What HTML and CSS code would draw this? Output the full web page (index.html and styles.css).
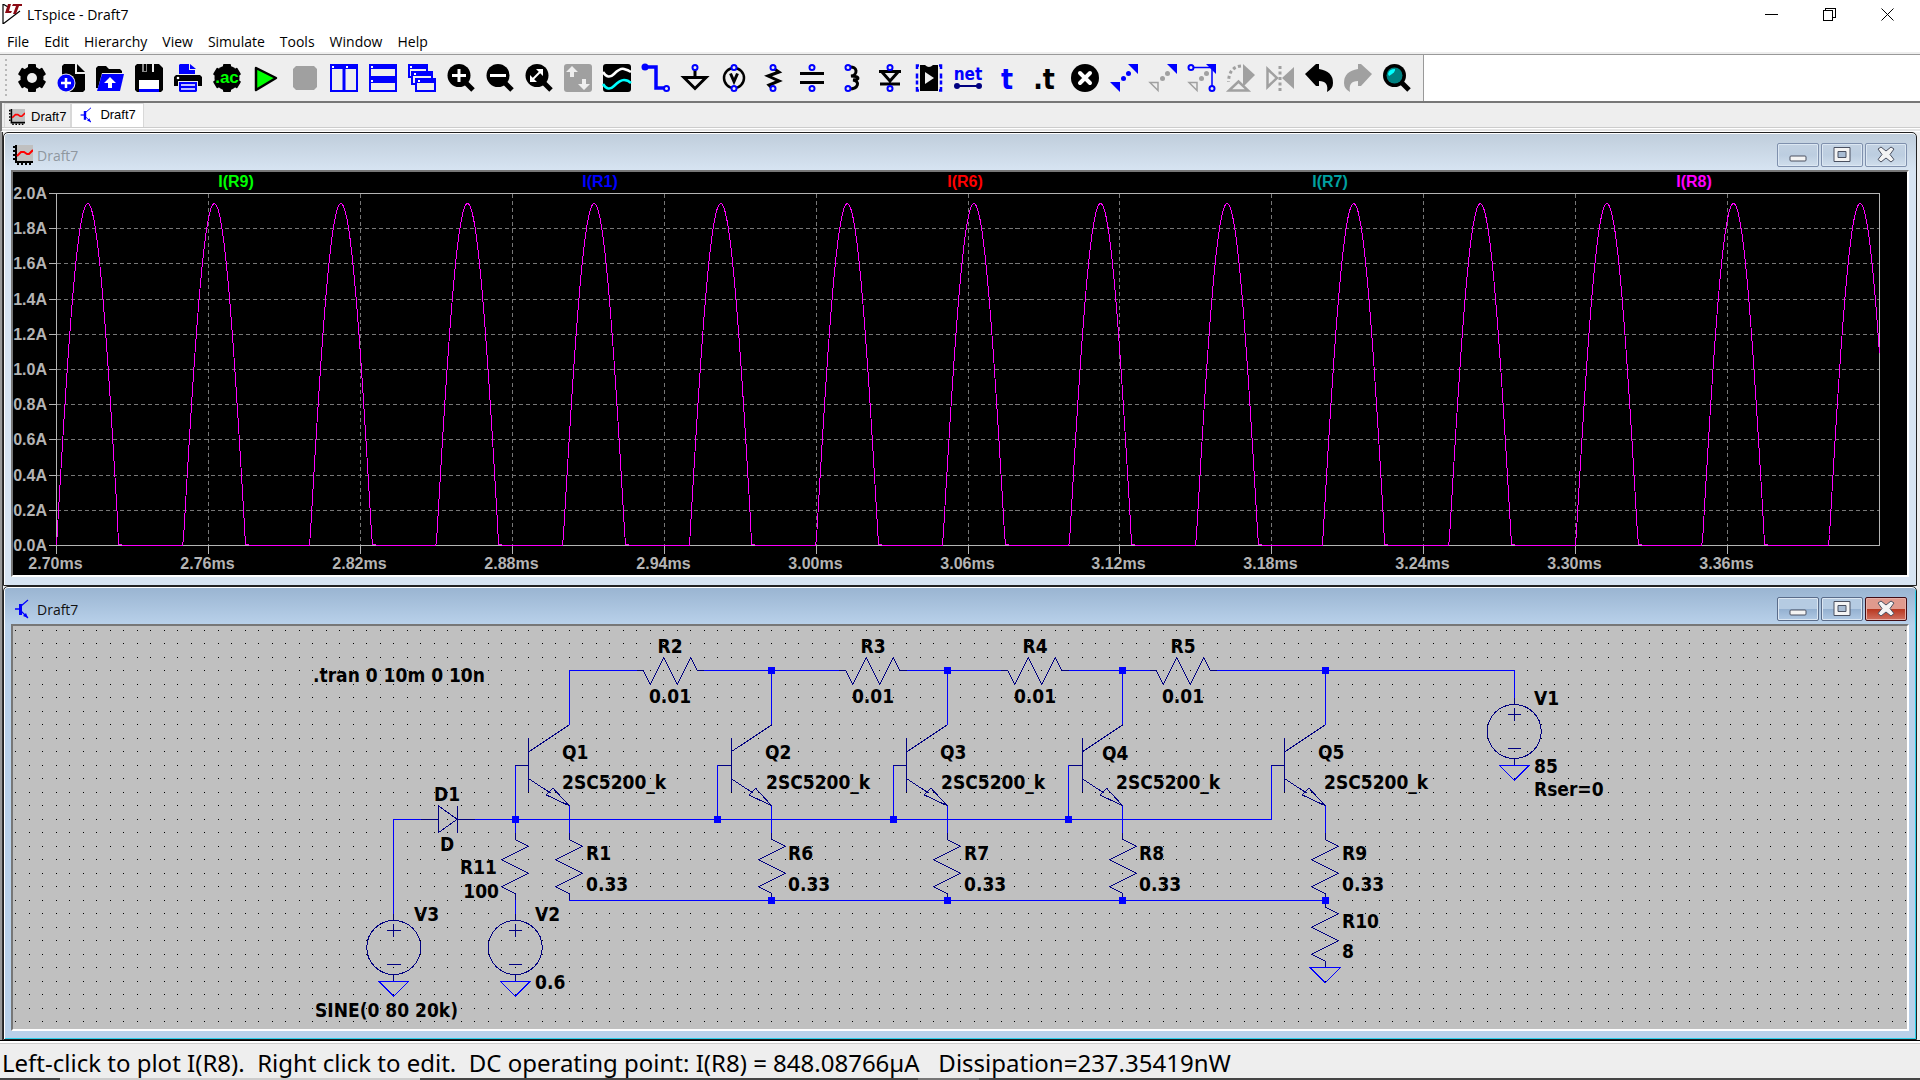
FILE: index.html
```
<!DOCTYPE html>
<html lang="en">
<head>
<meta charset="UTF-8" />
<meta name="viewport" content="width=device-width, initial-scale=1" />
<title>LTspice - Draft7</title>
<link rel="stylesheet" href="styles.css">
</head>
<body>

<!-- shared shapes -->
<svg class="defs" aria-hidden="true">
  <defs>
    <symbol id="ic-graph" viewBox="0 0 20 20">
      <path d="M4 0h16v16H4z" fill="#c0c0c0"/>
      <path d="M3 0v17h17" fill="none" stroke="#000" stroke-width="2"/>
      <path d="M0 2h2M0 6h2M0 10h2M0 14h2M5 18v2M9 18v2M13 18v2M17 18v2" stroke="#000" stroke-width="2"/>
      <path d="M4 11l4-4h3l3 2h2l4-4" fill="none" stroke="#f00" stroke-width="2"/>
    </symbol>
    <symbol id="ic-npn" viewBox="0 0 20 20">
      <path d="M2 10h5" stroke="#00f" stroke-width="1.500"/>
      <path d="M7.500 5v11" stroke="#00f" stroke-width="3"/>
      <path d="M8 7l7-6M8 12l7 7" fill="none" stroke="#00f" stroke-width="1.200"/>
      <path d="M15 19l-5-2 3-3z" fill="#00f"/>
    </symbol>
    <symbol id="ic-min" viewBox="0 0 18 18"><rect x="1" y="10" width="16" height="5" rx="1" fill="#f4f4f4" stroke="#4a5060"/></symbol>
    <symbol id="ic-max" viewBox="0 0 18 18">
      <path d="M1 1.500h16v14H1z" fill="#f4f4f4" stroke="#4a5060"/>
      <path d="M5 5.500h8v6H5z" fill="#a9bdd4" stroke="#4a5060"/>
    </symbol>
    <symbol id="ic-close" viewBox="0 0 18 18">
      <path d="M1 3l3-2 5 4 5-4 3 2-4 5.500 4 5-3 2.500-5-4-5 4-3-2.500 4-5z" fill="#f4f4f4" stroke="#4a5060"/>
    </symbol>
    <g id="ring"><circle r="2.500" fill="#eee" stroke="#00f" stroke-width="2"/></g>

    <!-- schematic symbols, one unit = one grid step -->
    <path id="res" d="M0 0v.5L1 1L-1 2L1 3L-1 4L0 4.500V5"/>
    <path id="resh" d="M0 0h.5L1 1L2-1L3 1L4-1L4.500 0H5"/>
    <path id="npn" d="M0 3H1M1 1V5M1 2L4 0M1 4L2.600 5.050M4 6L2.300 5.200L2.800 4.700Z"/>
    <path id="volt" d="M0 0V.5M0 4.500V5M-2 2.500a2 2 0 0 0 4 0a2 2 0 0 0-4 0M0 .75V1.750M-.5 1.250H.5M-.5 3.750H.5"/>
    <path id="gnd" d="M-1.100 0H1.100L0 1.100Z"/>
    <path id="dot" d="M-.25-.25h.5v.5h-.5z"/>
  </defs>
</svg>

<header class="titlebar">
  <svg class="logo" viewBox="0 0 20 20"><path d="M1 0v20l17-13M1 0l5 3" fill="none" stroke="#000" stroke-width="1.200"/><path d="M6 0h3L7 7h3l-1 2H3zM11 0h10l-1 2h-3l-3 8h-3l3-8h-4z" fill="#8b0a14"/></svg>
  <h1>LTspice - Draft7</h1>
  <div class="sys">
    <button type="button" aria-label="Minimize"><svg viewBox="0 0 13 13"><path d="M0 6h13" /></svg></button>
    <button type="button" aria-label="Restore"><svg viewBox="0 0 13 13"><path d="M.5 2.500h9v10h-9zM2.500 2.500v-2h10v9h-3"/></svg></button>
    <button type="button" aria-label="Close"><svg viewBox="0 0 13 13"><path class="smooth" d="M.5.5l12 12M12.500.5l-12 12"/></svg></button>
  </div>
</header>

<nav class="menubar">
  <button type="button">File</button>
  <button type="button">Edit</button>
  <button type="button">Hierarchy</button>
  <button type="button">View</button>
  <button type="button">Simulate</button>
  <button type="button">Tools</button>
  <button type="button">Window</button>
  <button type="button">Help</button>
</nav>

<div class="toolrow">
<div class="toolbar" role="toolbar">
  <span class="grip"></span>
  <button type="button" aria-label="Settings"><svg viewBox="0 0 28 28"><circle cx="14" cy="14" r="11.500"/><g id="teeth"><rect x="10" width="8" height="28" rx="1"/><rect x="10" width="8" height="28" rx="1" transform="rotate(60 14 14)"/><rect x="10" width="8" height="28" rx="1" transform="rotate(120 14 14)"/></g><circle cx="14" cy="14" r="5" fill="#eee"/></svg></button>
  <button type="button" aria-label="New"><svg viewBox="0 0 28 28"><path d="M7 0h11v10h10v16l-2 2H7L5 26V2z"/><path d="M20 0l8 8h-8z"/><circle cx="9" cy="19" r="9.500" fill="#eee"/><circle cx="9" cy="19" r="8.500" fill="#00f"/><path d="M9 14v10M4 19h10" stroke="#fff" stroke-width="2.500"/></svg></button>
  <button type="button" aria-label="Open"><svg viewBox="0 0 28 28"><path d="M0 24V4l2-2h8l3 3h11l2 2v2H6L2 24z"/><path d="M6 10h22l-4 17H1z" fill="#00f"/><path d="M14 13l6 6h-4v5h-4v-5H8z" fill="#fff"/></svg></button>
  <button type="button" aria-label="Save"><svg viewBox="0 0 28 28"><path d="M2 0h22l4 4v22l-2 2H2l-2-2V2z"/><path d="M7 0h5v8H7z" fill="#888"/><path d="M9 0h2v7H9z"/><path d="M17 0h2v8h-2z" fill="#eee"/><path d="M4 16h20v9H4z" fill="#fff"/><path d="M4 25h20v3H4z" fill="#00f"/></svg></button>
  <button type="button" aria-label="Print"><svg viewBox="0 0 28 28"><path d="M6 0h9v6h6v4H5V1z" fill="#00f"/><path d="M16 0l6 5h-6z" fill="#00f"/><path d="M2 11h24l2 2v9H0v-9z"/><circle cx="4" cy="14" r="1.300" fill="#fff"/><path d="M4 17h20v11H4z" fill="#eee"/><path d="M5 18h18v9l-1 1H6l-1-1z" fill="#00f"/><path d="M7 21h14M7 25h14" stroke="#fff" stroke-width="1.500"/></svg></button>
  <button type="button" aria-label="Configure analysis"><svg viewBox="0 0 28 28"><circle cx="14" cy="14" r="12.500"/><use href="#teeth"/><text class="ac" x="14" y="19" text-anchor="middle">.ac</text></svg></button>
  <button type="button" aria-label="Run"><svg viewBox="0 0 28 28"><path d="M4 4l20 10L4 26z" fill="#0f0" stroke="#000" stroke-width="2.500" stroke-linejoin="round"/></svg></button>
  <button type="button" aria-label="Stop"><svg viewBox="0 0 28 28"><path d="M5 2h18l3 3v18l-3 3H5l-3-3V5z" fill="#a0a0a0"/></svg></button>
  <button type="button" aria-label="Tile vertically"><svg viewBox="0 0 28 28"><path d="M1 1h12.500v26H1zM14.500 1H27v26H14.500z" fill="#eee" stroke="#00f" stroke-width="2"/><path d="M1 1h12v4H1zM15 1h12v4H15z" fill="#00f"/><path d="M2 2h2v2H2zM16 2h2v2h-2z" fill="#fff"/></svg></button>
  <button type="button" aria-label="Tile horizontally"><svg viewBox="0 0 28 28"><path d="M1 1h26v12H1zM1 15h26v12H1z" fill="#eee" stroke="#00f" stroke-width="2"/><path d="M1 1h26v4H1zM1 15h26v4H1z" fill="#00f"/><path d="M2 2h2v2H2zM2 16h2v2H2z" fill="#fff"/></svg></button>
  <button type="button" aria-label="Cascade"><svg viewBox="0 0 28 28"><g fill="#eee" stroke="#00f" stroke-width="2"><path d="M1 1h18v12H1z"/><path d="M4 8h20v12H4z"/><path d="M8 15h19v12H8z"/></g><path d="M1 1h18v4H1zM4 8h20v4H4zM8 15h19v4H8z" fill="#00f"/><path d="M2 2h2v2H2zM6 9h2v2H6zM10 16h2v2h-2z" fill="#fff"/></svg></button>
  <button type="button" aria-label="Zoom in"><svg viewBox="0 0 28 28"><circle cx="12" cy="11.500" r="11.500"/><path d="M17 17l9 9" stroke="#000" stroke-width="5"/><path d="M12 5v13M5 11.500h14" stroke="#fff" stroke-width="3"/></svg></button>
  <button type="button" aria-label="Zoom out"><svg viewBox="0 0 28 28"><circle cx="12" cy="11.500" r="11.500"/><path d="M17 17l9 9" stroke="#000" stroke-width="5"/><path d="M4 11.500h16" stroke="#fff" stroke-width="3"/></svg></button>
  <button type="button" aria-label="Zoom to fit"><svg viewBox="0 0 28 28"><circle cx="12" cy="11.500" r="11.500"/><path d="M17 17l9 9" stroke="#000" stroke-width="5"/><path d="M11 5h7v7zM5 11v7h7z" fill="#fff"/><path d="M7 16l9-9" stroke="#fff" stroke-width="2"/></svg></button>
  <button type="button" aria-label="Autorange"><svg viewBox="0 0 28 28"><rect width="28" height="28" rx="3" fill="#a0a0a0"/><path d="M8 2l6 6h-4v5H6V8H2zM20 26l-6-6h4v-5h4v5h4z" fill="#eee"/></svg></button>
  <button type="button" aria-label="Plot pane"><svg viewBox="0 0 28 28"><rect width="28" height="28" rx="3"/><g fill="none" stroke-width="2.500"><path d="M0 8q5 8 11 2t10-5 7 3" stroke="#fff"/><path d="M0 20q5 8 11 2t10-6 7 3" stroke="#0ff"/></g></svg></button>
  <button type="button" aria-label="Wire"><svg viewBox="0 0 28 28"><path d="M3 3h11v21h9" fill="none" stroke="#00f" stroke-width="3.500"/><circle cx="3" cy="3" r="3.500" fill="#00f"/><use href="#ring" x="24.500" y="24.500"/></svg></button>
  <button type="button" aria-label="Ground"><svg viewBox="0 0 28 28"><path d="M14 4v9M3 13.500h22l-11 11z" fill="none" stroke="#000" stroke-width="3"/><use href="#ring" x="14" y="3.500"/></svg></button>
  <button type="button" aria-label="Voltage source"><svg viewBox="0 0 28 28"><circle cx="14" cy="14" r="10" fill="none" stroke="#000" stroke-width="2.500"/><path d="M10.500 9.500l3.500 8 3.500-8" fill="none" stroke="#000" stroke-width="3"/><use href="#ring" x="14" y="3.500"/><use href="#ring" x="14" y="24.500"/></svg></button>
  <button type="button" aria-label="Resistor"><svg viewBox="0 0 28 28"><path d="M14 4l6 4-11 4 11 5-10 4 4 4" fill="none" stroke="#000" stroke-width="3"/><use href="#ring" x="14" y="3.500"/><use href="#ring" x="14" y="24.500"/></svg></button>
  <button type="button" aria-label="Capacitor"><svg viewBox="0 0 28 28"><path d="M2 9.500h24M2 18.500h24" stroke="#000" stroke-width="3"/><use href="#ring" x="14" y="3.500"/><use href="#ring" x="14" y="24.500"/></svg></button>
  <button type="button" aria-label="Inductor"><svg viewBox="0 0 28 28"><path d="M12 3c9-1 9 8 2 9 9 0 9 4 2 4 7 1 6 9-4 9" fill="none" stroke="#000" stroke-width="3"/><use href="#ring" x="11" y="3.500"/><use href="#ring" x="11" y="24.500"/></svg></button>
  <button type="button" aria-label="Diode"><svg viewBox="0 0 28 28"><path d="M3 7.500h22M6 8l8 9 8-9M4 20h20" fill="none" stroke="#000" stroke-width="3"/><use href="#ring" x="14" y="3.500"/><use href="#ring" x="14" y="24.500"/></svg></button>
  <button type="button" aria-label="Component"><svg viewBox="0 0 28 28"><path d="M5 1h5q4 4 8 0h5v26H5z"/><path d="M10 8l9 6-9 6z" fill="#eee"/><path d="M4 1.500H2V5M24 1.500h2V5M4 26.500H2V23M24 26.500h2V23M2 9.500v5M2 16.500v4M26 9.500v5M26 16.500v4" fill="none" stroke="#00f" stroke-width="2.500"/></svg></button>
  <button type="button" aria-label="Net name"><svg viewBox="0 0 28 28"><text class="net" x="14" y="16" text-anchor="middle">net</text><path d="M2 22h24" stroke="#000080" stroke-width="2"/><circle cx="3" cy="22" r="3" fill="#000080"/><circle cx="25" cy="22" r="3" fill="#000080"/></svg></button>
  <button type="button" aria-label="Text"><svg viewBox="0 0 28 28"><text class="tee blue" x="14" y="25" text-anchor="middle">t</text></svg></button>
  <button type="button" aria-label="Spice directive"><svg viewBox="0 0 28 28"><text class="tee" x="12" y="25" text-anchor="middle">.t</text></svg></button>
  <button type="button" aria-label="Delete"><svg viewBox="0 0 28 28"><circle cx="14" cy="14" r="14"/><path d="M9 9l10 10M19 9L9 19" stroke="#fff" stroke-width="4" stroke-linecap="round"/></svg></button>
  <button type="button" aria-label="Move"><svg viewBox="0 0 28 28"><path d="M18 0h10v10zM0 18h10v10z" fill="#00f"/><g fill="#00f"><circle cx="13.500" cy="14.500" r="2.500"/><circle cx="18.500" cy="9.500" r="2.500"/></g></svg></button>
  <button type="button" aria-label="Drag"><svg viewBox="0 0 28 28"><path d="M18 0h10v10z" fill="#00f"/><path d="M1 18.500h8v8z" fill="none" stroke="#a0a0a0" stroke-width="1.500"/><g fill="#a0a0a0"><circle cx="13.500" cy="14.500" r="2.500"/><circle cx="18.500" cy="9.500" r="2.500"/></g></svg></button>
  <button type="button" aria-label="Drag with wires"><svg viewBox="0 0 28 28"><path d="M4 3.500h20v20" fill="none" stroke="#00f" stroke-width="1.500"/><path d="M18 0h10v10z" fill="#00f"/><path d="M1 18.500h8v8z" fill="none" stroke="#a0a0a0" stroke-width="1.500"/><g fill="#a0a0a0"><circle cx="13.500" cy="14.500" r="2.500"/><circle cx="18.500" cy="9.500" r="2.500"/></g><use href="#ring" x="3" y="3.500"/><use href="#ring" x="24" y="24.500"/></svg></button>
  <button type="button" aria-label="Rotate"><svg viewBox="0 0 28 28"><path d="M16 0l12 11-12 12z" fill="#a0a0a0"/><path d="M2 26.500h19l-9.500-9z" fill="#eee" stroke="#a0a0a0" stroke-width="2.500"/><path d="M14 2Q2 3 1.500 18" fill="none" stroke="#a0a0a0" stroke-width="3" stroke-dasharray="3 2.500"/></svg></button>
  <button type="button" aria-label="Mirror"><svg viewBox="0 0 28 28"><path d="M28 3v22L16 14z" fill="#a0a0a0"/><path d="M1.500 5v18L11 14z" fill="none" stroke="#a0a0a0" stroke-width="2.500"/><path d="M14 2v25" stroke="#a0a0a0" stroke-width="3" stroke-dasharray="3 2.500"/></svg></button>
  <button type="button" aria-label="Undo"><svg viewBox="0 0 28 28"><path d="M0 10L11 0h3v5q14 2 14 14 0 6-6 9 2-11-8-11v5h-3z"/></svg></button>
  <button type="button" aria-label="Redo"><svg viewBox="0 0 28 28"><path d="M28 10L17 0h-3v5Q0 7 0 19q0 6 6 9-2-11 8-11v5h3z" fill="#a0a0a0"/></svg></button>
  <button type="button" aria-label="Find"><svg viewBox="0 0 28 28"><circle cx="11.500" cy="11.500" r="11.500"/><path d="M17 17l9 9" stroke="#000" stroke-width="5"/><circle cx="11.500" cy="11.500" r="8" fill="#008080"/><path d="M5 10q1-5 7-5 1 3-6 7z" fill="#0ff"/></svg></button>
</div>
</div>

<nav class="tabs">
  <button type="button" class="tab"><svg><use href="#ic-graph"/></svg>Draft7</button>
  <button type="button" class="tab active"><svg><use href="#ic-npn"/></svg>Draft7</button>
</nav>

<main class="mdi">
  <section class="window">
    <div class="caption">
      <svg class="icon"><use href="#ic-graph"/></svg>
      <h2>Draft7</h2>
      <button type="button" aria-label="Minimize"><svg><use href="#ic-min"/></svg></button>
      <button type="button" aria-label="Maximize"><svg><use href="#ic-max"/></svg></button>
      <button type="button" aria-label="Close"><svg><use href="#ic-close"/></svg></button>
    </div>
    <div class="pane">
      <svg class="plot" id="plot" viewBox="0 0 1894 403"></svg>
    </div>
  </section>

  <section class="window active">
    <div class="caption">
      <svg class="icon"><use href="#ic-npn"/></svg>
      <h2>Draft7</h2>
      <button type="button" aria-label="Minimize"><svg><use href="#ic-min"/></svg></button>
      <button type="button" aria-label="Maximize"><svg><use href="#ic-max"/></svg></button>
      <button type="button" class="close" aria-label="Close"><svg><use href="#ic-close"/></svg></button>
    </div>
    <div class="pane">
      <svg class="schematic" viewBox="0 0 1894 403">
        <path id="grid" class="grid"/>
        <g transform="translate(2.750 4.250) scale(13.500)">
          <path class="wire" d="M41 7V3H46M51 3H61M66 3H73M78 3H84M89 3H111V5M56 3V7M69 3V7M82 3V7M97 3V7"/>
          <path class="wire" d="M28 21V14H30M34 14H93V10M37 10V15M52 10V14M65 10V14M78 10V14M37 20V21"/>
          <path class="wire" d="M41 13V15M56 13V15M69 13V15M82 13V15M97 13V15M41 20H97"/>
          <g class="part">
            <use href="#resh" x="46" y="3"/><use href="#resh" x="61" y="3"/><use href="#resh" x="73" y="3"/><use href="#resh" x="84" y="3"/>
            <use href="#npn" x="37" y="7"/><use href="#npn" x="52" y="7"/><use href="#npn" x="65" y="7"/><use href="#npn" x="78" y="7"/><use href="#npn" x="93" y="7"/>
            <use href="#res" x="37" y="15"/><use href="#res" x="41" y="15"/><use href="#res" x="56" y="15"/><use href="#res" x="69" y="15"/><use href="#res" x="82" y="15"/><use href="#res" x="97" y="15"/><use href="#res" x="97" y="20"/>
            <use href="#volt" x="28" y="21"/><use href="#volt" x="37" y="21"/><use href="#volt" x="111" y="5"/>
            <path d="M30 14H31.300M31.300 13V15L32.700 14ZM32.700 13V15M32.700 14H34"/>
          </g>
          <g class="wire">
            <use href="#gnd" x="28" y="26"/><use href="#gnd" x="37" y="26"/><use href="#gnd" x="111" y="10"/><use href="#gnd" x="97" y="25"/>
          </g>
          <g class="node">
            <use href="#dot" x="56" y="3"/><use href="#dot" x="69" y="3"/><use href="#dot" x="82" y="3"/><use href="#dot" x="97" y="3"/>
            <use href="#dot" x="37" y="14"/><use href="#dot" x="52" y="14"/><use href="#dot" x="65" y="14"/><use href="#dot" x="78" y="14"/>
            <use href="#dot" x="56" y="20"/><use href="#dot" x="69" y="20"/><use href="#dot" x="82" y="20"/><use href="#dot" x="97" y="20"/>
          </g>
        </g>
        <text x="300" y="56">.tran 0 10m 0 10n</text>
        <g text-anchor="middle">
          <text x="657" y="27">R2</text><text x="657" y="77">0.01</text>
          <text x="860" y="27">R3</text><text x="860" y="77">0.01</text>
          <text x="1022" y="27">R4</text><text x="1022" y="77">0.01</text>
          <text x="1170" y="27">R5</text><text x="1170" y="77">0.01</text>
          <text x="434" y="175">D1</text><text x="434" y="225">D</text>
        </g>
        <text x="549" y="133">Q1</text><text x="549" y="163">2SC5200_k</text>
        <text x="752" y="133">Q2</text><text x="753" y="163">2SC5200_k</text>
        <text x="927" y="133">Q3</text><text x="928" y="163">2SC5200_k</text>
        <text x="1089" y="134">Q4</text><text x="1103" y="163">2SC5200_k</text>
        <text x="1305" y="133">Q5</text><text x="1311" y="163">2SC5200_k</text>
        <text x="573" y="234">R1</text><text x="573" y="265">0.33</text>
        <text x="775" y="234">R6</text><text x="775" y="265">0.33</text>
        <text x="951" y="234">R7</text><text x="951" y="265">0.33</text>
        <text x="1126" y="234">R8</text><text x="1126" y="265">0.33</text>
        <text x="1329" y="234">R9</text><text x="1329" y="265">0.33</text>
        <text x="1329" y="302">R10</text><text x="1329" y="332">8</text>
        <text x="484" y="248" text-anchor="end">R11</text><text x="486" y="272" text-anchor="end">100</text>
        <text x="401" y="295">V3</text><text x="522" y="295">V2</text><text x="522" y="363">0.6</text>
        <text x="302" y="391">SINE(0 80 20k)</text>
        <text x="1521" y="79">V1</text><text x="1521" y="147">85</text><text x="1521" y="170">Rser=0</text>
      </svg>
    </div>
  </section>
</main>

<footer class="status">Left-click to plot I(R8).&nbsp; Right click to edit.&nbsp; DC operating point: I(R8) = 848.08766µA&nbsp;&nbsp; Dissipation=237.35419nW</footer>
<div class="edge"></div>

<script src="script.js"></script>
</body>
</html>
```
FILE: styles.css
```
* { box-sizing: border-box; }
body {
  margin: 0;
  background: #eee;
  color: #000;
  font-family: "Open Sans", "Noto Sans", sans-serif;
  font-size: 14px;
}
h1, h2 { margin: 0; font-size: 14px; font-weight: normal; }
button { border: 0; padding: 0; background: none; color: inherit; font: inherit; }
svg { display: block; }
.defs { width: 0; height: 0; position: absolute; }

/* title bar and menu */
.titlebar { display: flex; align-items: center; height: 28px; padding-left: 2px; background: #fff; }
.logo { width: 20px; height: 20px; margin-right: 5px; }
.sys { display: flex; gap: 45px; margin-left: auto; padding-right: 26px; }
.sys svg { width: 13px; height: 13px; fill: none; stroke: #000; shape-rendering: crispEdges; }
.sys .smooth { shape-rendering: auto; }
.menubar {
  display: flex;
  gap: 15px;
  height: 26px;
  padding: 2px 7px 0;
  background: #fff;
  border-bottom: 2px solid #eee;
}

/* toolbar */
.toolrow { background: #fff; border-top: 1px solid #999; border-bottom: 2px solid #777; }
.toolbar {
  display: flex;
  align-items: center;
  gap: 11px;
  width: max-content;
  height: 46px;
  padding: 0 12px 0 5px;
  background: #eee;
  border-right: 1px solid #999;
}
.toolbar svg { width: 28px; height: 28px; overflow: visible; }
.grip { width: 2px; height: 38px; background: repeating-linear-gradient(#b8b8b8 0 2px, #eee 2px 5px); }
.ac { font: bold 17px "Liberation Sans", sans-serif; fill: #0f0; }
.net { font: bold 17px "DejaVu Sans Condensed", "DejaVu Sans", sans-serif; fill: #00f; }
.tee { font: bold 28px "DejaVu Sans Condensed", "DejaVu Sans", sans-serif; }
.blue { fill: #00f; }

/* document tabs */
.tabs {
  display: flex;
  height: 29px;
  padding-left: 2px;
  border-left: 2px solid #777;
  border-bottom: 1px solid #fff;
  background: linear-gradient(#eee 24px, #ccc 24px, #ccc 25px, #fff 25px, #fff 26px, #e4e4e4 26px);
}
.tab {
  display: flex;
  align-items: center;
  gap: 6px;
  height: 24px;
  padding: 2px 4px 0;
  border: 1px solid #d8d8d8;
  border-bottom: 0;
  font: 13px "Liberation Sans", sans-serif;
}
.tab.active { padding: 0 7px 2px; gap: 5px; background: #fff; }
.tab svg { width: 16px; height: 16px; }

/* child windows */
.mdi { padding: 0 3px; border-bottom: 1px solid #000; background: linear-gradient(90deg, #999 2px, #333 2px, #333 3px, #eee 3px); }
.window {
  padding: 0 7px 8px;
  border: 1px solid #222;
  border-radius: 5px 5px 0 0;
  background: linear-gradient(#bfcddb, #d7e4f2 38px);
  box-shadow: inset 0 1px #fff, inset 1px 0 #fff;
}
.window.active { background: linear-gradient(#99b4d1, #b9d1ea 38px); box-shadow: inset 0 1px #fff, inset 1px 0 #fff, inset -1px -1px #2cd0ea; }
.caption { display: flex; align-items: center; gap: 2px; height: 37px; padding: 7px 2px 0 0; color: #8f979f; }
.active .caption { color: #111; }
.caption .icon { width: 20px; height: 20px; margin: 0 2px; }
.caption h2 { flex: 1; }
.caption button {
  display: grid;
  place-items: center;
  width: 42px;
  height: 24px;
  border: 1px solid #7f90ad;
  border-radius: 2px;
  background: linear-gradient(#c3d2e2, #bccde0 50%, #d0deec);
  box-shadow: inset 0 0 0 1px #dce7f2;
}
.active .caption button { border-color: #5a6c8a; background: linear-gradient(#b5cbe2 50%, #94b0d0 50%, #b0c9e4); }
.active .caption .close { border-color: #400c14; background: linear-gradient(#e09a8e 50%, #b8361f 50%, #d07060); box-shadow: inset 0 0 0 1px #e8b0a8; }
.caption button svg { width: 18px; height: 18px; }
.pane { border: 2px solid; border-color: #777 #fff #fff #777; }
.pane svg { width: 100%; height: auto; }

.plot { background: #000; shape-rendering: crispEdges; font: bold 16px "Liberation Sans", Arial, sans-serif; }
.axis { fill: none; stroke: #b4b4b4; }
.dash { fill: none; stroke: #777; stroke-dasharray: 4 3; }
.trace { fill: none; stroke: #f0f; }
.plot .tick { fill: #b4b4b4; }

.schematic { background: #c0c0c0; shape-rendering: crispEdges; font: bold 19px "DejaVu Sans Condensed", "DejaVu Sans", sans-serif; }
.grid { stroke: #000; }
.schematic use, .schematic path, #res, #resh, #npn, #volt, #gnd { vector-effect: non-scaling-stroke; }
.wire { fill: none; stroke: #00f; }
.part { fill: none; stroke: #000080; }
.node { fill: #00f; }

/* status bar */
.status {
  height: 37px;
  padding: 4px 2px 0;
  border-top: 2px solid #fff;
  box-shadow: inset 0 1px #ccc;
  font-family: "Noto Sans", "Open Sans", sans-serif;
  font-size: 24px;
  line-height: 32px;
  white-space: nowrap;
}
.edge { height: 2px; background: linear-gradient(90deg, #444 60px, #ccc 60px, #ccc 420px, #444 420px, #444 918px, #777 918px, #777 979px, #444 979px); }
```
FILE: script.js
```
const NS = 'http://www.w3.org/2000/svg';
const plot = document.getElementById('plot');

function add(tag, attrs, text) {
  const el = document.createElementNS(NS, tag);
  for (const key in attrs) el.setAttribute(key, attrs[key]);
  if (text) el.textContent = text;
  plot.appendChild(el);
}

// plot area inside the pane
const left = 43.5, right = 1866.5, top_ = 21.5, bottom = 373.5;
const stepX = (right - left) / 12;
const stepY = (bottom - top_) / 10;

let dash = '', axis = `M${left} ${top_}H${right}V${bottom}H${left}Z`;
for (let i = 0; i <= 10; i++) {
  const y = Math.round(bottom - i * stepY - 0.5) + 0.5;
  axis += `M${left - 8} ${y}H${left}`;
  if (i > 0 && i < 10) dash += `M${left} ${y}H${right}`;
  add('text', { class: 'tick', x: 34, y: y + 5, 'text-anchor': 'end' }, (i * 0.2).toFixed(1) + 'A');
}
for (let i = 0; i < 12; i++) {
  const x = Math.round(left + i * stepX - 0.5) + 0.5;
  axis += `M${x} ${bottom}V${bottom + 8}`;
  if (i > 0) dash += `M${x} ${top_}V${bottom}`;
  add('text', { class: 'tick', x: x - 1, y: 397, 'text-anchor': 'middle' }, (2.7 + i * 0.06).toFixed(2) + 'ms');
}
add('path', { class: 'dash', d: dash });
add('path', { class: 'axis', d: axis });

// half-wave rectified 20 kHz current, 1.94 A peak
const period = (right - left) * 0.05 / 0.72;
let d = `M${left} ${bottom}`;
for (let x = 0; x <= right - left; x++) {
  const p = x % period;
  let y = bottom;
  if (p < 62) y = bottom - 342 * Math.sin(Math.PI * p / 62.5);
  else if (p < 66) y = bottom - 1;
  d += `L${left + x} ${y.toFixed(1)}`;
}
add('path', { class: 'trace', d });

const names = [['I(R9)', '#0f0'], ['I(R1)', '#00f'], ['I(R6)', '#f00'], ['I(R7)', '#00a0a0'], ['I(R8)', '#f0f']];
names.forEach(([name, fill], i) => {
  add('text', { x: Math.round(left + (i + 0.5) * (right - left) / 5) - 3, y: 15, fill, 'text-anchor': 'middle' }, name);
});

// snap dots of the schematic
let dots = '';
for (let m = 0; m < 30; m++) {
  for (let n = 0; n < 141; n++) dots += `M${Math.floor(2.5 + 13.5 * n)} ${Math.floor(4.2 + 13.5 * m) + 0.5}h1`;
}
document.getElementById('grid').setAttribute('d', dots);
```
